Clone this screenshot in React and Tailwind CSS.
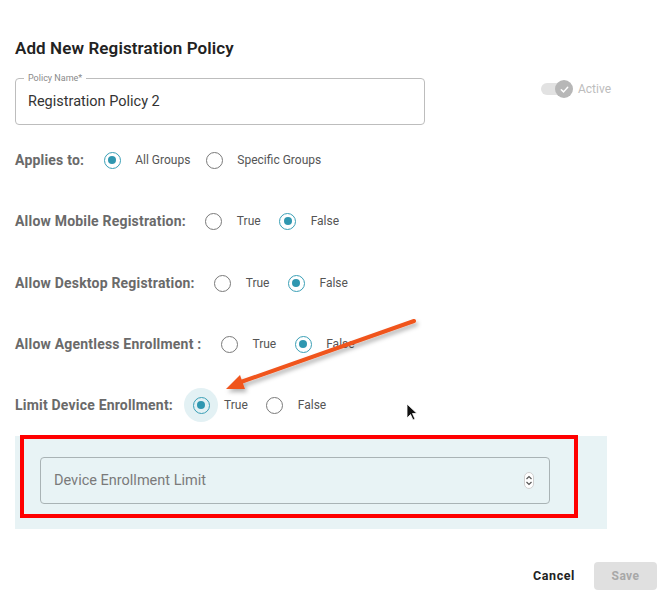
import React from "react";

function Radio({ checked, halo }) {
  return (
    <span className="relative flex h-[18px] w-[18px] shrink-0 items-center justify-center">
      {halo && <span className="absolute left-[-8px] top-[-8px] h-[34px] w-[34px] rounded-full bg-[#e3f1f4]" />}
      <span
        className={
          "relative flex h-[17px] w-[17px] items-center justify-center rounded-full border-[1.5px] " +
          (checked ? "border-[#3a9fb6]" : "border-[#7a7a7a]")
        }
      >
        {checked && <span className="h-[8px] w-[8px] rounded-full bg-[#2f97b0]" />}
      </span>
    </span>
  );
}

function Row({ label, a, b, first, mt, halo, gap }) {
  return (
    <div className={"flex h-[20px] items-center " + mt}>
      <span className="text-[14px] font-bold tracking-[0.2px] text-[#6a6a6a]">{label}</span>
      <span className="ml-[19px]">
        <Radio checked={first} halo={halo && first} />
      </span>
      <span className="ml-[14px] text-[12px] text-[#555]">{a}</span>
      <span className={gap}>
        <Radio checked={!first} />
      </span>
      <span className="ml-[14px] text-[12px] text-[#555]">{b}</span>
    </div>
  );
}

export default function App() {
  return (
    <div
      className="relative h-[594px] w-[661px] overflow-hidden bg-white"
      style={{ fontFamily: "Roboto, 'Liberation Sans', sans-serif" }}
    >
      <div className="px-[15px] pt-[38px]">
        <h1 className="h-[20px] text-[17px] font-semibold leading-[20px] tracking-[0.1px] text-[#222]">
          Add New Registration Policy
        </h1>

        <div className="mt-[20px] flex items-start">
          <div className="relative h-[47px] w-[410px] rounded-[4px] border border-[#bdbdbd]">
            <span className="absolute left-[8px] top-[-7px] bg-white px-[4px] text-[9px] leading-[12px] text-[#8a8a8a]">
              Policy Name*
            </span>
            <div className="flex h-full items-center pl-[12px] text-[14.5px] text-[#333]">
              Registration Policy 2
            </div>
          </div>
          <div className="ml-[116px] mt-[2px] flex h-[18px] items-center">
            <span className="relative flex h-[18px] w-[32px] items-center">
              <span className="h-[12px] w-[28px] rounded-full bg-[#e2e2e2]" />
              <span className="absolute left-[14px] top-0 flex h-[18px] w-[18px] items-center justify-center rounded-full bg-[#b7b7b7]">
                <svg width="11" height="11" viewBox="0 0 12 12">
                  <path d="M2.5 6.2 L5 8.6 L9.5 3.6" fill="none" stroke="#fff" strokeWidth="1.6" strokeLinecap="round" strokeLinejoin="round" />
                </svg>
              </span>
            </span>
            <span className="ml-[5px] text-[12px] text-[#bdbdbd]">Active</span>
          </div>
        </div>

        <Row label="Applies to:" a="All Groups" b="Specific Groups" first mt="mt-[25px]" gap="ml-[15px]" />
        <Row label="Allow Mobile Registration:" a="True" b="False" first={false} mt="mt-[41px]" gap="ml-[18px]" />
        <Row label="Allow Desktop Registration:" a="True" b="False" first={false} mt="mt-[42px]" gap="ml-[18px]" />
        <Row label="Allow Agentless Enrollment :" a="True" b="False" first={false} mt="mt-[41px]" gap="ml-[18px]" />
        <Row label="Limit Device Enrollment:" a="True" b="False" first halo mt="mt-[41px]" gap="ml-[18px]" />

        <div className="relative mt-[21px] h-[93px] w-[592px] bg-[#e8f3f5] pl-[25px] pt-[21px]">
          <div className="flex h-[47px] w-[510px] items-center justify-between rounded-[4px] border border-[#a9b3b5] pl-[13px] pr-[15px]">
            <span className="text-[14.5px] text-[#7a7a7a]">Device Enrollment Limit</span>
            <span className="flex h-[17px] w-[10px] flex-col items-center justify-center rounded-full border border-[#d0d0d0] bg-white">
              <svg width="8" height="13" viewBox="0 0 8 13">
                <path d="M1.5 5 L4 2.5 L6.5 5 M1.5 8 L4 10.5 L6.5 8" fill="none" stroke="#555" strokeWidth="1.2" />
              </svg>
            </span>
          </div>
          <div className="pointer-events-none absolute left-[5px] top-[-1px] h-[83px] w-[558px] border-[4px] border-[#ff0000]" />
        </div>
      </div>

      <div className="absolute bottom-[4px] right-[4px] flex items-center">
        <span className="mr-[19px] text-[12.5px] font-bold tracking-[0.6px] text-[#222]">Cancel</span>
        <span className="flex h-[28px] w-[63px] items-center justify-center rounded-[4px] bg-[#e0e0e0] text-[12px] font-bold tracking-[0.4px] text-[#a8a8a8]">
          Save
        </span>
      </div>

      <svg className="pointer-events-none absolute left-0 top-0" width="661" height="594">
        <defs>
          <filter id="sh" x="-20%" y="-20%" width="140%" height="140%">
            <feDropShadow dx="2" dy="3" stdDeviation="2" floodColor="#000" floodOpacity="0.3" />
          </filter>
        </defs>
        <g filter="url(#sh)">
          <line x1="414" y1="321" x2="238" y2="383" stroke="#f0541f" strokeWidth="4" strokeLinecap="round" />
          <polygon points="226,389 240,375 245,389" fill="#f0541f" />
        </g>
        <path d="M407 404 L407 418 L410.5 414.5 L413 420 L415 419 L412.5 413.5 L417 413.5 Z" fill="#111" stroke="#fff" strokeWidth="0.8" />
      </svg>
    </div>
  );
}
